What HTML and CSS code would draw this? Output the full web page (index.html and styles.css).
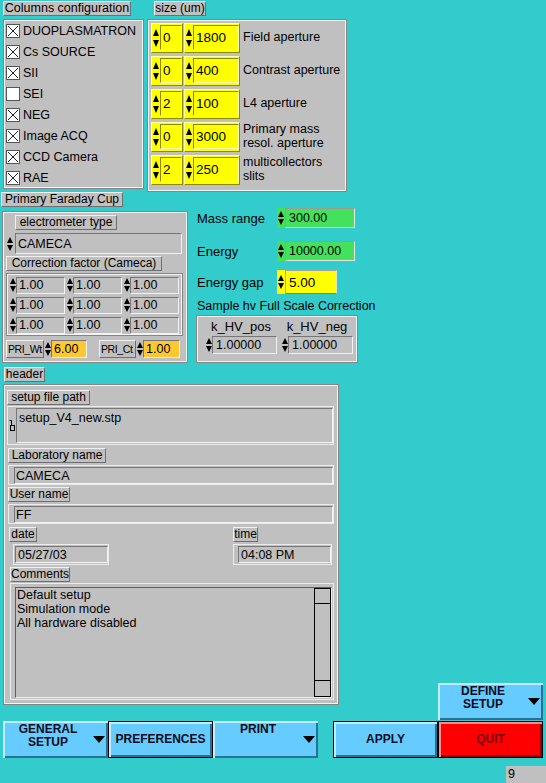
FILE: index.html
```html
<!DOCTYPE html>
<html>
<head>
<meta charset="utf-8">
<link rel="stylesheet" href="styles.css">
</head>
<body>
<div class="screen">

  <div class="row1">
    <div class="colcfg">
      <div class="tag t-cols">Columns configuration</div>
      <div class="panel pcfg">
        <div class="chk"><svg class="cb" viewBox="0 0 14 14"><rect x="0.5" y="0.5" width="13" height="13" fill="#fff" stroke="#555"/><path d="M2 2L12 12M12 2L2 12" stroke="#222" fill="none"/></svg><span>DUOPLASMATRON</span></div>
        <div class="chk"><svg class="cb" viewBox="0 0 14 14"><rect x="0.5" y="0.5" width="13" height="13" fill="#fff" stroke="#555"/><path d="M2 2L12 12M12 2L2 12" stroke="#222" fill="none"/></svg><span>Cs SOURCE</span></div>
        <div class="chk"><svg class="cb" viewBox="0 0 14 14"><rect x="0.5" y="0.5" width="13" height="13" fill="#fff" stroke="#555"/><path d="M2 2L12 12M12 2L2 12" stroke="#222" fill="none"/></svg><span>SII</span></div>
        <div class="chk"><svg class="cb" viewBox="0 0 14 14"><rect x="0.5" y="0.5" width="13" height="13" fill="#fff" stroke="#555"/></svg><span>SEI</span></div>
        <div class="chk"><svg class="cb" viewBox="0 0 14 14"><rect x="0.5" y="0.5" width="13" height="13" fill="#fff" stroke="#555"/><path d="M2 2L12 12M12 2L2 12" stroke="#222" fill="none"/></svg><span>NEG</span></div>
        <div class="chk"><svg class="cb" viewBox="0 0 14 14"><rect x="0.5" y="0.5" width="13" height="13" fill="#fff" stroke="#555"/><path d="M2 2L12 12M12 2L2 12" stroke="#222" fill="none"/></svg><span>Image ACQ</span></div>
        <div class="chk"><svg class="cb" viewBox="0 0 14 14"><rect x="0.5" y="0.5" width="13" height="13" fill="#fff" stroke="#555"/><path d="M2 2L12 12M12 2L2 12" stroke="#222" fill="none"/></svg><span>CCD Camera</span></div>
        <div class="chk"><svg class="cb" viewBox="0 0 14 14"><rect x="0.5" y="0.5" width="13" height="13" fill="#fff" stroke="#555"/><path d="M2 2L12 12M12 2L2 12" stroke="#222" fill="none"/></svg><span>RAE</span></div>
      </div>
    </div>

    <div class="colsize">
      <div class="tag t-size">size (um)</div>
      <div class="panel psize">
        <div class="srow">
          <div class="spin yel sm"><i class="arr"></i><span class="fld">0</span></div>
          <div class="spin yel lg"><i class="arr"></i><span class="fld">1800</span></div>
          <div class="slbl">Field aperture</div>
        </div>
        <div class="srow">
          <div class="spin yel sm"><i class="arr"></i><span class="fld">0</span></div>
          <div class="spin yel lg"><i class="arr"></i><span class="fld">400</span></div>
          <div class="slbl">Contrast aperture</div>
        </div>
        <div class="srow">
          <div class="spin yel sm"><i class="arr"></i><span class="fld">2</span></div>
          <div class="spin yel lg"><i class="arr"></i><span class="fld">100</span></div>
          <div class="slbl">L4 aperture</div>
        </div>
        <div class="srow">
          <div class="spin yel sm"><i class="arr"></i><span class="fld">0</span></div>
          <div class="spin yel lg"><i class="arr"></i><span class="fld">3000</span></div>
          <div class="slbl">Primary mass<br>resol. aperture</div>
        </div>
        <div class="srow">
          <div class="spin yel sm"><i class="arr"></i><span class="fld">2</span></div>
          <div class="spin yel lg"><i class="arr"></i><span class="fld">250</span></div>
          <div class="slbl">multicollectors<br>slits</div>
        </div>
      </div>
    </div>
  </div>

  <div class="row2">
    <div class="colfar">
      <div class="tag t-far">Primary Faraday Cup</div>
      <div class="panel pfar">
        <div class="tag t-elec">electrometer type</div>
        <div class="spin gray elec"><i class="arr"></i><span class="fld">CAMECA</span></div>
        <div class="tag t-corr">Correction factor (Cameca)</div>
        <div class="panel pgrid">
          <div class="spin gray cell"><i class="arr"></i><span class="fld">1.00</span></div>
          <div class="spin gray cell"><i class="arr"></i><span class="fld">1.00</span></div>
          <div class="spin gray cell"><i class="arr"></i><span class="fld">1.00</span></div>
          <div class="spin gray cell"><i class="arr"></i><span class="fld">1.00</span></div>
          <div class="spin gray cell"><i class="arr"></i><span class="fld">1.00</span></div>
          <div class="spin gray cell"><i class="arr"></i><span class="fld">1.00</span></div>
          <div class="spin gray cell"><i class="arr"></i><span class="fld">1.00</span></div>
          <div class="spin gray cell"><i class="arr"></i><span class="fld">1.00</span></div>
          <div class="spin gray cell"><i class="arr"></i><span class="fld">1.00</span></div>
        </div>
        <div class="prow">
          <div class="tag t-pri">PRI_Wt</div>
          <div class="spin org o1"><i class="arr"></i><span class="fld">6.00</span></div>
          <div class="tag t-pri t-pri2">PRI_Ct</div>
          <div class="spin org o2"><i class="arr"></i><span class="fld">1.00</span></div>
        </div>
      </div>
    </div>

    <div class="colmass">
      <div class="mrow r-mass"><span class="mlbl">Mass range</span><div class="spin grn"><i class="arr"></i><span class="fld">300.00</span></div></div>
      <div class="mrow r-en"><span class="mlbl">Energy</span><div class="spin grn"><i class="arr"></i><span class="fld">10000.00</span></div></div>
      <div class="mrow r-gap"><span class="mlbl">Energy gap</span><div class="spin yel2"><i class="arr"></i><span class="fld">5.00</span></div></div>
      <div class="mtext">Sample hv Full Scale Correction</div>
      <div class="panel phv">
        <div class="hvcol">
          <div class="hvl">k_HV_pos</div>
          <div class="spin gray hvs"><i class="arr"></i><span class="fld">1.00000</span></div>
        </div>
        <div class="hvcol">
          <div class="hvl">k_HV_neg</div>
          <div class="spin gray hvs"><i class="arr"></i><span class="fld">1.00000</span></div>
        </div>
      </div>
    </div>
  </div>

  <div class="row3">
    <div class="colhdr">
      <div class="tag t-hdr">header</div>
      <div class="panel phdr">
        <div class="tag t-sfp">setup file path</div>
        <div class="ffile">
          <svg class="ficon" viewBox="0 0 7 14"><path d="M0.5 1.5H2.5V6.5" fill="none" stroke="#000"/><rect x="1.5" y="6.5" width="4" height="5" fill="none" stroke="#000"/></svg>
          <div class="fld ffld">setup_V4_new.stp</div>
        </div>
        <div class="tag t-lab">Laboratory name</div>
        <div class="hframe"><div class="fld">CAMECA</div></div>
        <div class="tag t-user">User name</div>
        <div class="hframe"><div class="fld">FF</div></div>
        <div class="dtrow">
          <div class="dcol">
            <div class="tag t-date">date</div>
            <div class="hframe dframe"><div class="fld">05/27/03</div></div>
          </div>
          <div class="tcol">
            <div class="tag t-time">time</div>
            <div class="hframe tframe"><div class="fld">04:08 PM</div></div>
          </div>
        </div>
        <div class="tag t-com">Comments</div>
        <div class="cframe">
          <div class="ctext">
            <div class="ctxt">Default setup<br>Simulation mode<br>All hardware disabled</div>
            <div class="vsb"><div class="sbt"></div><div class="sbm"></div><div class="sbb"></div></div>
          </div>
        </div>
      </div>
    </div>
    <div class="btn define"><div class="bt">DEFINE<br>SETUP</div><i class="tri"></i></div>
  </div>

  <div class="brow">
    <div class="btn"><div class="bt">GENERAL<br>SETUP</div><i class="tri"></i></div>
    <div class="btn one def"><div class="bt">PREFERENCES</div></div>
    <div class="btn"><div class="bt">PRINT</div><i class="tri"></i></div>
    <div class="btn one def apply"><div class="bt">APPLY</div></div>
    <div class="btn one def quit"><div class="bt">QUIT</div></div>
  </div>

  <div class="nine">9</div>
</div>
</body>
</html>
```

FILE: styles.css
```css
* { box-sizing: border-box; }

html, body {
  margin: 0;
  padding: 0;
  background: #33cccc;
}

body {
  width: 546px;
  height: 783px;
  overflow: hidden;
  font-family: "Liberation Sans", Arial, sans-serif;
  font-size: 12.5px;
  color: #000;
}

.screen { width: 546px; height: 783px; }

/* generic pieces */
.tag {
  height: 15px;
  line-height: 13px;
  font-size: 12px;
  background: #c0c0c0;
  border: 1px solid;
  border-color: #f0f0f0 #6e6e6e #6e6e6e #f0f0f0;
  padding: 0;
  white-space: nowrap;
  text-align: center;
}

.panel {
  background: #c0c0c0;
  border: 1px solid #858585;
  box-shadow: inset 1px 1px 0 #f4f4f4, inset -1px -1px 0 #f4f4f4;
}

.spin { display: flex; align-items: stretch; }

.arr {
  flex: none;
  width: 7px;
  display: flex;
  flex-direction: column;
  justify-content: center;
  align-items: center;
  gap: 2px;
}
.arr::before {
  content: "";
  border-left: 3px solid transparent;
  border-right: 3px solid transparent;
  border-bottom: 6px solid #000;
}
.arr::after {
  content: "";
  border-left: 3px solid transparent;
  border-right: 3px solid transparent;
  border-top: 6px solid #000;
}

.fld {
  flex: 1;
  min-width: 0;
  display: flex;
  align-items: center;
  border: 1px solid;
  border-color: #767676 #f2f2f2 #f2f2f2 #767676;
  padding-left: 2px;
  white-space: nowrap;
  overflow: hidden;
  background: #c0c0c0;
}

/* row 1 */
.row1 { display: flex; height: 192px; padding-top: 1px; }

.colcfg { margin-left: 3px; width: 141px; }
.t-cols { width: 128px; font-size: 12.5px; }
.pcfg { margin-top: 3px; height: 170px; }
.chk { display: flex; align-items: center; height: 21px; padding-left: 2px; }
.cb { width: 14px; height: 14px; flex: none; margin-right: 3px; }

.colsize { margin-left: 3px; width: 200px; }
.t-size { margin-left: 7px; width: 52px; }
.psize {
  margin-top: 3px;
  height: 173px;
  padding: 3px 0 0 3px;
  display: flex;
  flex-direction: column;
  gap: 3px;
}
.srow { display: flex; height: 30px; }
.slbl {
  margin-left: 3px;
  display: flex;
  align-items: center;
  line-height: 14px;
  padding-bottom: 3px;
  white-space: nowrap;
}

.spin.yel {
  background: #ffff00;
  border: 1px solid;
  border-color: #ffffa8 #8a8a00 #8a8a00 #ffffa8;
  padding: 1px 0 2px 0;
}
.spin.yel .arr { width: 8px; gap: 4px; }
.spin.yel .arr::before { border-bottom-width: 7px; }
.spin.yel .arr::after { border-top-width: 7px; }
.spin.yel .fld {
  background: #ffff00;
  border-color: #8a8a00 #ffffb8 #ffffb8 #8a8a00;
  font-size: 13.5px;
  padding-left: 2px;
}
.sm { width: 32px; }
.lg { width: 56px; margin-left: 1px; }
.lg .arr { width: 9px; }

/* row 2 */
.row2 { display: flex; height: 171px; }

.colfar { margin-left: 1px; width: 187px; }
.t-far { width: 122px; }
.pfar { margin: 4px 0 0 1px; width: 186px; height: 152px; }
.t-elec { margin: 3px 0 0 12px; width: 102px; }
.elec { margin: 3px 0 0 2px; width: 177px; height: 21px; }
.elec .arr { width: 10px; }
.t-corr { margin: 2px 0 0 3px; width: 156px; }
.pgrid {
  margin: 2px 0 0 3px;
  width: 177px;
  height: 63px;
  display: grid;
  grid-template-columns: 57px 57px 57px;
  grid-auto-rows: 20px;
  padding: 1px 0 0 2px;
}
.cell { height: 17px; align-self: center; }
.cell .fld { margin-right: 1px; }

.prow { display: flex; margin: 4px 0 0 3px; height: 18px; }
.t-pri {
  width: 38px;
  height: 18px;
  line-height: 16px;
  font-size: 10.5px;
  text-align: left;
  padding-left: 1px;
  letter-spacing: -0.4px;
}
.t-pri2 { width: 37px; margin-left: 12px; }
.spin.org .fld { background: #ffc832; }
.o1 { width: 43px; }
.o2 { width: 44px; }

.colmass { margin-left: 8px; width: 162px; }
.mrow { display: flex; }
.mlbl { width: 81px; padding-left: 1px; display: flex; align-items: center; white-space: nowrap; font-size: 13px; }
.r-mass { margin-top: 16px; height: 20px; }
.r-en { margin-top: 13px; height: 20px; }
.r-gap { margin-top: 9px; height: 24px; }
.spin.grn { width: 78px; background: #44e25c; }
.spin.grn .arr { width: 8px; }
.spin.grn .fld {
  background: #44e25c;
  border-color: #9a9a9a #e6e6e6 #e6e6e6 #9a9a9a;
  padding-left: 3px;
}
.spin.yel2 { width: 60px; background: #ffff00; }
.spin.yel2 .arr { width: 8px; }
.spin.yel2 .fld {
  background: #ffff00;
  border-color: #a8a8a0 #e6e6c0 #8a8a00 #a8a8a0;
  font-size: 13.5px;
  padding-left: 3px;
}
.mtext { margin-top: 5px; line-height: 14px; padding-left: 1px; white-space: nowrap; }
.phv {
  margin-top: 2px;
  width: 162px;
  height: 48px;
  display: flex;
  gap: 4px;
  padding: 3px 0 0 8px;
}
.hvcol { width: 72px; }
.hvl { height: 16px; line-height: 15px; text-align: center; font-size: 13px; }
.hvs { height: 18px; margin-top: 1px; }
.hvs .fld { padding-left: 3px; }

/* row 3 */
.row3 { display: flex; align-items: flex-start; height: 358px; }
.colhdr { margin-left: 3px; width: 336px; }
.t-hdr { margin-top: 4px; margin-left: 1px; width: 41px; }
.phdr { margin-top: 2px; width: 336px; height: 321px; }
.t-sfp { margin: 5px 0 0 3px; width: 83px; }
.ffile {
  margin: 1px 0 0 3px;
  width: 327px;
  height: 39px;
  display: flex;
  border: 1px solid #ececec;
  padding: 1px 0 1px 1px;
}
.ficon { width: 7px; height: 14px; flex: none; align-self: center; }
.ffld { align-items: flex-start; padding-top: 2px; padding-left: 2px; }
.t-lab { margin: 3px 0 0 4px; width: 98px; }
.hframe {
  margin: 2px 0 0 4px;
  width: 326px;
  height: 20px;
  display: flex;
  border: 1px solid #ececec;
  padding: 1px 0 0 5px;
}
.hframe .fld { padding-left: 1px; }
.t-user { margin: 2px 0 0 4px; width: 62px; }
.dtrow { display: flex; margin: 3px 0 0 5px; }
.dcol { width: 224px; }
.t-date { width: 28px; }
.t-time { width: 25px; }
.dframe { margin: 2px 0 0 4px; width: 96px; height: 21px; padding: 1px 0 1px 1px; }
.tframe { margin: 2px 0 0 0; width: 99px; height: 21px; padding: 1px 0 1px 4px; }
.dframe .fld, .tframe .fld { padding-left: 2px; }
.t-com { margin: 2px 0 0 6px; width: 60px; }
.cframe {
  margin: 1px 0 0 6px;
  width: 324px;
  height: 117px;
  border: 1px solid #ececec;
  padding: 3px 1px 1px 4px;
}
.ctext {
  height: 100%;
  display: flex;
  border: 1px solid;
  border-color: #5e5e5e #f0f0f0 #f0f0f0 #5e5e5e;
}
.ctxt { flex: 1; padding-left: 1px; line-height: 14px; }
.vsb {
  width: 17px;
  border: 1px solid #000;
  display: flex;
  flex-direction: column;
}
.sbt { height: 15px; border-bottom: 1px solid #000; }
.sbm { flex: 1; }
.sbb { height: 16px; border-top: 1px solid #000; }

/* buttons */
.btn {
  width: 105px;
  height: 37px;
  flex: none;
  display: flex;
  background: #66ccff;
  box-shadow: inset 2px 2px 0 #c4ecff, inset -2px -2px 0 #2a6f96;
  font-weight: bold;
  font-size: 12px;
  line-height: 13px;
  color: #0a0a20;
}
.bt { flex: 1; text-align: center; padding-top: 2px; white-space: nowrap; }
.btn.one .bt { align-self: center; padding-top: 0; }
.tri {
  width: 0;
  height: 0;
  align-self: center;
  margin-right: 3px;
  border-left: 6.5px solid transparent;
  border-right: 6.5px solid transparent;
  border-top: 7px solid #000;
}
.def { border: 1px solid #000; }
.define { margin-left: 99px; margin-top: 320px; }
.brow { display: flex; margin-left: 3px; height: 37px; }
.apply { margin-left: 15px; }
.quit {
  background: #ff0000;
  box-shadow: inset 2px 2px 0 #ff8c8c, inset -2px -2px 0 #8a0000;
  color: #7a0000;
}

.nine {
  margin: 8px 0 0 506px;
  width: 40px;
  height: 17px;
  background: #c0c0c0;
  padding-left: 2px;
  line-height: 17px;
  font-size: 12.5px;
}
```
